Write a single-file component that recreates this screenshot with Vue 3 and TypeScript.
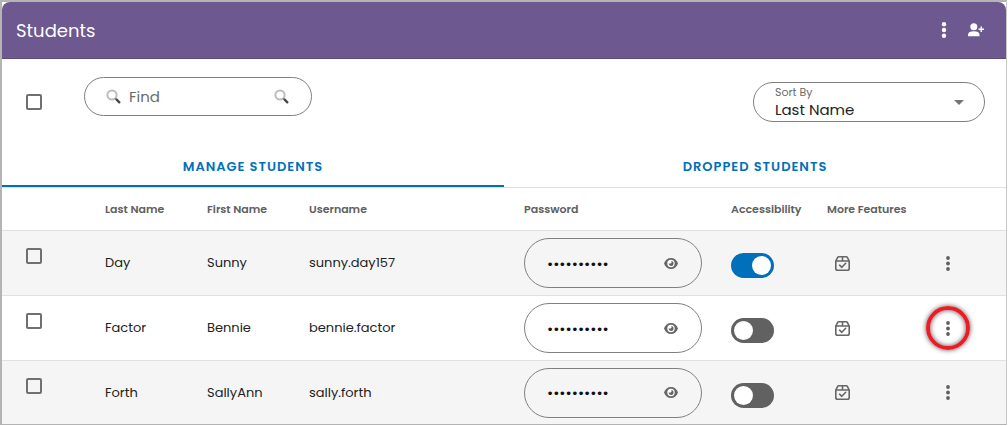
<script setup lang="ts">
import { reactive, ref } from 'vue'

interface Student {
  id: number
  last: string
  first: string
  username: string
  password: string
  accessible: boolean
  selected: boolean
  visible: boolean
  highlighted: boolean
}

const students = reactive<Student[]>([
  { id: 1, last: 'Day', first: 'Sunny', username: 'sunny.day157', password: 'sunshine10', accessible: true, selected: false, visible: false, highlighted: false },
  { id: 2, last: 'Factor', first: 'Bennie', username: 'bennie.factor', password: 'benefactor', accessible: false, selected: false, visible: false, highlighted: true },
  { id: 3, last: 'Forth', first: 'SallyAnn', username: 'sally.forth', password: 'sallyforth', accessible: false, selected: false, visible: false, highlighted: false },
])

const tab = ref<'manage' | 'dropped'>('manage')
const query = ref('')
const sortBy = ref('last')
const allSelected = ref(false)

function toggleAll() {
  students.forEach((s) => (s.selected = allSelected.value))
}
</script>

<template>
  <main class="panel">
    <header class="bar">
      <h1>Students</h1>
      <button class="icon-btn" type="button" aria-label="Class options">
        <svg width="6" height="16" viewBox="0 0 6 16" fill="currentColor">
          <circle cx="3" cy="2.3" r="2.2" /><circle cx="3" cy="8" r="2.2" /><circle cx="3" cy="13.7" r="2.2" />
        </svg>
      </button>
      <button class="icon-btn" type="button" aria-label="Add student">
        <svg width="16" height="14" viewBox="0 0 16 14" fill="currentColor">
          <circle cx="5.8" cy="3.8" r="3.5" />
          <path d="M0 13.2v-1.400C0 9.300 2.200 8.200 5.800 8.200s5.700 1.100 5.700 3.600v1.400z" />
          <path d="M12.500 3.500h1.500v2h2v1.500h-2v2h-1.500v-2h-2v-1.500h2z" />
        </svg>
      </button>
    </header>

    <section class="tools">
      <input v-model="allSelected" class="check" type="checkbox" aria-label="Select all students" @change="toggleAll" />
      <form class="search" role="search" @submit.prevent>
        <svg class="lens" width="15" height="15" viewBox="0 0 15 15" fill="none">
          <circle cx="6" cy="6" r="4.600" stroke="#bdbdbd" stroke-width="2" />
          <path d="M9.300 9.300l1.500 1.500" stroke="#888" stroke-width="1.800" />
          <path d="M10.700 10.700l2.600 2.600" stroke="#484848" stroke-width="2.400" stroke-linecap="round" />
        </svg>
        <input v-model="query" type="text" placeholder="Find" aria-label="Find" />
        <button type="submit" aria-label="Search">
          <svg class="lens" width="15" height="15" viewBox="0 0 15 15" fill="none">
            <circle cx="6" cy="6" r="4.600" stroke="#bdbdbd" stroke-width="2" />
            <path d="M9.300 9.300l1.500 1.500" stroke="#888" stroke-width="1.800" />
            <path d="M10.700 10.700l2.600 2.600" stroke="#484848" stroke-width="2.400" stroke-linecap="round" />
          </svg>
        </button>
      </form>
      <div class="sort">
        <div class="sort-field">
          <label for="sort">Sort By</label>
          <select id="sort" v-model="sortBy">
            <option value="last">Last Name</option>
            <option value="first">First Name</option>
          </select>
        </div>
        <svg width="10" height="5" viewBox="0 0 10 5"><path d="M0 0h10L5 5z" fill="#757575" /></svg>
      </div>
    </section>

    <nav class="tabs" role="tablist">
      <button type="button" role="tab" :class="{ active: tab === 'manage' }" :aria-selected="tab === 'manage'" @click="tab = 'manage'">MANAGE STUDENTS</button>
      <button type="button" role="tab" :class="{ active: tab === 'dropped' }" :aria-selected="tab === 'dropped'" @click="tab = 'dropped'">DROPPED STUDENTS</button>
    </nav>

    <table>
      <colgroup>
        <col class="c-check" /><col class="c-name" /><col class="c-name" /><col />
        <col class="c-pass" /><col class="c-access" /><col class="c-feat" /><col class="c-menu" />
      </colgroup>
      <thead>
        <tr>
          <td></td>
          <th scope="col">Last Name</th>
          <th scope="col">First Name</th>
          <th scope="col">Username</th>
          <th scope="col">Password</th>
          <th scope="col">Accessibility</th>
          <th scope="col">More Features</th>
          <td></td>
        </tr>
      </thead>
      <tbody>
        <tr v-for="s in students" :key="s.id">
          <td class="pick"><input v-model="s.selected" class="check" type="checkbox" :aria-label="`Select ${s.first} ${s.last}`" /></td>
          <td>{{ s.last }}</td>
          <td>{{ s.first }}</td>
          <td>{{ s.username }}</td>
          <td>
            <div class="secret">
              <input v-model="s.password" :type="s.visible ? 'text' : 'password'" :aria-label="`Password of ${s.first} ${s.last}`" />
              <button type="button" aria-label="Show password" @click="s.visible = !s.visible">
                <svg width="14" height="11" viewBox="0 0 14 11">
                  <path fill="#666" d="M7 0C3.700 0 1.200 2 0 5.500 1.200 9 3.700 11 7 11s5.800-2 7-5.500C12.800 2 10.300 0 7 0z" />
                  <circle cx="7" cy="5.500" r="3.700" fill="#fff" />
                  <path fill="#666" d="M7.200 3.100a1.500 1.500 0 0 1-2.400 2A2.400 2.400 0 1 0 7.200 3.100z" />
                </svg>
              </button>
            </div>
          </td>
          <td class="access"><input v-model="s.accessible" class="switch" type="checkbox" role="switch" :aria-label="`Accessibility for ${s.first} ${s.last}`" /></td>
          <td>
            <button class="feature" type="button" aria-label="More features">
              <svg width="15" height="15" viewBox="0 0 15 15" fill="none" stroke="#666" stroke-width="1.600" stroke-linejoin="round">
                <path d="M.8 5L2.400 1.800q.5-1 1.500-1h7.200q1 0 1.500 1L14.200 5v7.400q0 1.800-1.800 1.800H2.600q-1.800 0-1.800-1.800zM.8 5h13.400M7.500.8V5" />
                <path d="M4.600 9.200l2.200 2.100 3.900-4" stroke-linecap="round" />
              </svg>
            </button>
          </td>
          <td>
            <button class="more" :class="{ ringed: s.highlighted }" type="button" :aria-label="`Options for ${s.first} ${s.last}`">
              <svg width="4" height="15" viewBox="0 0 4 15" fill="#606060">
                <circle cx="2" cy="2" r="1.900" /><circle cx="2" cy="7.500" r="1.900" /><circle cx="2" cy="13" r="1.900" />
              </svg>
            </button>
          </td>
        </tr>
      </tbody>
    </table>
  </main>
</template>

<style>
body {
  background: #fff;
}
</style>

<style scoped>
* {
  box-sizing: border-box;
}
.panel {
  border: 2px solid #b4b4b4;
  border-right: 1px solid #c8c8c8;
  border-bottom-width: 1px;
  margin: 0 1px 1px 0;
  font-family: Poppins, Inter, sans-serif;
  font-size: 13px;
  color: #222;
  background: #fff;
}
button,
input,
select {
  margin: 0;
  padding: 0;
  border: 0;
  background: none;
  font: inherit;
  color: inherit;
  outline: none;
}
button {
  cursor: pointer;
}
svg {
  display: block;
}
.bar {
  display: flex;
  align-items: center;
  height: 57px;
  padding: 0 14px;
  border-radius: 8px 8px 0 0;
  background: #6d588f;
  border-bottom: 1px solid #604b82;
  color: #fff;
}
.bar h1 {
  flex: 1;
  margin: 0;
  font-size: 18px;
  font-weight: 400;
}
.icon-btn {
  display: grid;
  place-items: center;
  width: 32px;
  height: 32px;
}
.tools {
  display: flex;
  align-items: flex-start;
  height: 86px;
  padding: 18px 21px 0 24px;
}
.check {
  display: block;
  appearance: none;
  width: 16px;
  height: 16px;
  border: 2px solid #707070;
  border-radius: 2px;
}
.check:checked {
  background: #0070bb;
}
.tools .check {
  margin-top: 17px;
}
.search {
  display: flex;
  align-items: center;
  width: 228px;
  height: 39px;
  margin-left: 42px;
  padding: 0 22px 0 21px;
  border: 1px solid #808080;
  border-radius: 20px;
  font-size: 15px;
}
.search input {
  flex: 1;
  min-width: 0;
  margin-left: 8px;
}
.search input::placeholder {
  color: #6b6b6b;
  opacity: 1;
}
.sort {
  display: flex;
  align-items: center;
  width: 232px;
  height: 40px;
  margin: 5px 0 0 auto;
  padding: 0 20px 0 21px;
  border: 1px solid #808080;
  border-radius: 20px;
}
.sort-field {
  flex: 1;
}
.sort label {
  display: block;
  font-size: 11px;
  line-height: 15px;
  color: #6b6b6b;
}
.sort select {
  display: block;
  appearance: none;
  width: 100%;
  height: 19px;
  font-size: 15px;
  line-height: 17px;
}
.tabs {
  display: grid;
  grid-template-columns: 1fr 1fr;
  height: 43px;
  border-bottom: 1px solid #e0e0e0;
}
.tabs button {
  height: 42px;
  padding-top: 4px;
  border-bottom: 2px solid transparent;
  font-size: 13px;
  font-weight: 600;
  letter-spacing: 1px;
  color: #0070bb;
}
.tabs .active {
  border-bottom-color: #0070bb;
}
table {
  width: 100%;
  table-layout: fixed;
  border-collapse: separate;
  border-spacing: 0;
}
.c-check {
  width: 103px;
}
.c-name {
  width: 102px;
}
.c-pass {
  width: 207px;
}
.c-access {
  width: 96px;
}
.c-feat {
  width: 95px;
}
.c-menu {
  width: 84px;
}
th,
td {
  padding: 0;
  text-align: left;
  white-space: nowrap;
}
thead th,
thead td {
  height: 43px;
  border-bottom: 1px solid #e0e0e0;
}
th {
  font-size: 11px;
  font-weight: 600;
  color: #606060;
}
tbody td {
  height: 65px;
  border-bottom: 1px solid #e0e0e0;
}
tbody tr:last-child td {
  height: 63px;
  border-bottom: 0;
}
tbody tr:nth-child(odd) {
  background: #f5f5f5;
}
tbody .pick {
  padding: 17px 0 0 24px;
  vertical-align: top;
}
tbody .access {
  padding-top: 22px;
  vertical-align: top;
}
.secret {
  display: flex;
  align-items: center;
  width: 178px;
  height: 50px;
  padding: 0 22px;
  border: 1px solid #808080;
  border-radius: 25px;
}
.secret input {
  flex: 1;
  min-width: 0;
  font-size: 15px;
  color: #111;
}
.secret button {
  padding: 0 1px;
}
.switch {
  display: flex;
  align-items: center;
  appearance: none;
  width: 43px;
  height: 25px;
  padding: 0 3px;
  border-radius: 13px;
  background: #616161;
}
.switch::before {
  content: '';
  width: 19px;
  height: 19px;
  border-radius: 50%;
  background: #fff;
}
.switch:checked {
  justify-content: flex-end;
  background: #0070bb;
}
.feature {
  display: block;
  padding: 0 8px;
}
.more {
  position: relative;
  display: grid;
  place-items: center;
  width: 52px;
  height: 44px;
}
.ringed::after {
  content: '';
  position: absolute;
  inset: 0 4px;
  border: 4px solid #ed1c24;
  border-radius: 50%;
  box-shadow: 0 0 5px #555, inset 0 0 5px #555;
}
</style>
